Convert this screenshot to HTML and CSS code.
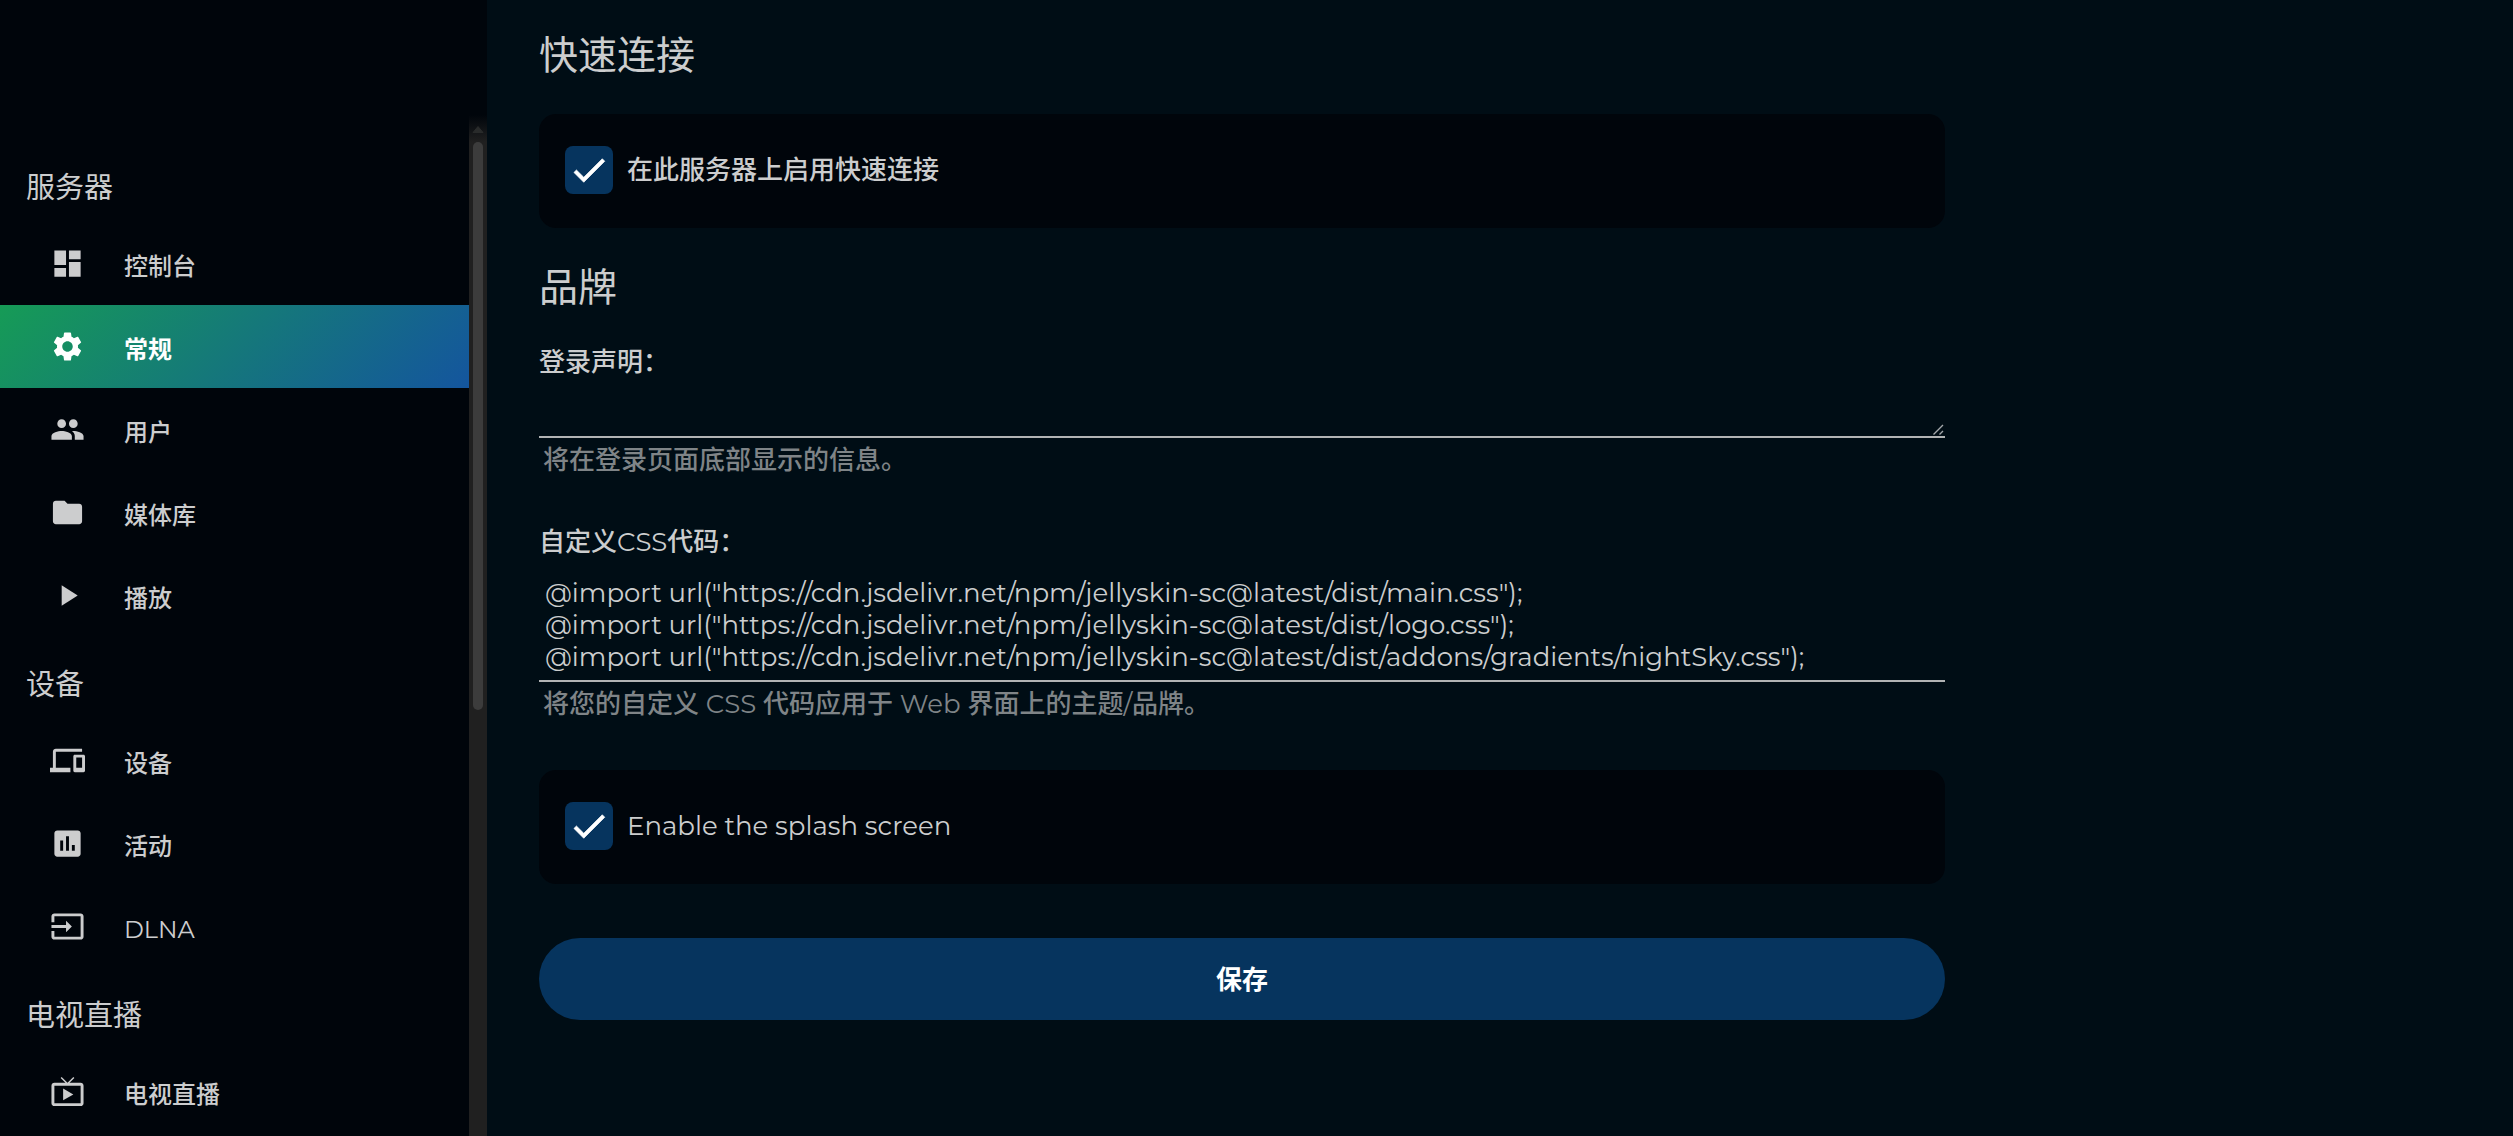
FILE: index.html
```html
<!DOCTYPE html>
<html lang="zh-CN">

<head>
    <meta charset="UTF-8">
    <meta name="viewport" content="width=device-width, initial-scale=1.0">
    <title>常规</title>
    <link rel="stylesheet" href="styles.css">
</head>

<body>
    <div class="container">
        <aside class="sidebar">
            <nav class="sidebar-nav">
                <h3 class="nav-header">服务器</h3>
                <a href="#" class="nav-item">
                    <svg class="nav-icon" viewBox="0 0 24 24"><path d="M3 13h8V3H3v10zm0 8h8v-6H3v6zm10 0h8V11h-8v10zm0-18v6h8V3h-8z"/></svg>
                    <span>控制台</span>
                </a>
                <a href="#" class="nav-item active">
                    <svg class="nav-icon" viewBox="0 0 24 24"><path d="M19.14 12.94c.04-.3.06-.61.06-.94 0-.32-.02-.64-.07-.94l2.03-1.58c.18-.14.23-.41.12-.61l-1.92-3.32c-.12-.22-.37-.29-.59-.22l-2.39.96c-.5-.38-1.03-.7-1.62-.94l-.36-2.54c-.04-.24-.24-.41-.48-.41h-3.84c-.24 0-.43.17-.47.41l-.36 2.54c-.59.24-1.13.57-1.62.94l-2.39-.96c-.22-.08-.47 0-.59.22L2.74 8.87c-.12.21-.08.47.12.61l2.03 1.58c-.05.3-.09.63-.09.94s.02.64.07.94l-2.03 1.58c-.18.14-.23.41-.12.61l1.92 3.32c.12.22.37.29.59.22l2.39-.96c.5.38 1.03.7 1.62.94l.36 2.54c.05.24.24.41.48.41h3.84c.24 0 .44-.17.47-.41l.36-2.54c.59-.24 1.13-.56 1.62-.94l2.39.96c.22.08.47 0 .59-.22l1.92-3.32c.12-.22.07-.47-.12-.61l-2.01-1.58zM12 15.6c-1.98 0-3.6-1.62-3.6-3.6s1.62-3.6 3.6-3.6 3.6 1.62 3.6 3.6-1.62 3.6-3.6 3.6z"/></svg>
                    <span>常规</span>
                </a>
                <a href="#" class="nav-item">
                    <svg class="nav-icon" viewBox="0 0 24 24"><path d="M16 11c1.66 0 2.99-1.34 2.99-3S17.66 5 16 5c-1.66 0-3 1.34-3 3s1.34 3 3 3zm-8 0c1.66 0 2.99-1.34 2.99-3S9.66 5 8 5C6.34 5 5 6.34 5 8s1.34 3 3 3zm0 2c-2.33 0-7 1.17-7 3.5V19h14v-2.5c0-2.33-4.67-3.5-7-3.5zm8 0c-.29 0-.62.02-.97.05 1.16.84 1.97 1.97 1.97 3.45V19h6v-2.5c0-2.33-4.67-3.5-7-3.5z"/></svg>
                    <span>用户</span>
                </a>
                <a href="#" class="nav-item">
                    <svg class="nav-icon" viewBox="0 0 24 24"><path d="M10 4H4c-1.1 0-1.99.9-1.99 2L2 18c0 1.1.9 2 2 2h16c1.1 0 2-.9 2-2V8c0-1.1-.9-2-2-2h-8l-2-2z"/></svg>
                    <span>媒体库</span>
                </a>
                <a href="#" class="nav-item">
                    <svg class="nav-icon" viewBox="0 0 24 24"><path d="M8 5v14l11-7z"/></svg>
                    <span>播放</span>
                </a>
                <h3 class="nav-header">设备</h3>
                <a href="#" class="nav-item">
                    <svg class="nav-icon" viewBox="0 0 24 24"><path d="M4 6h18V4H4c-1.1 0-2 .9-2 2v11H0v3h14v-3H4V6zm19 2h-6c-.55 0-1 .45-1 1v10c0 .55.45 1 1 1h6c.55 0 1-.45 1-1V9c0-.55-.45-1-1-1zm-1 9h-4v-7h4v7z"/></svg>
                    <span>设备</span>
                </a>
                <a href="#" class="nav-item">
                    <svg class="nav-icon" viewBox="0 0 24 24"><path d="M19 3H5c-1.1 0-2 .9-2 2v14c0 1.1.9 2 2 2h14c1.1 0 2-.9 2-2V5c0-1.1-.9-2-2-2zM9 17H7v-7h2v7zm4 0h-2V7h2v10zm4 0h-2v-4h2v4z"/></svg>
                    <span>活动</span>
                </a>
                <a href="#" class="nav-item">
                    <svg class="nav-icon" viewBox="0 0 24 24"><path d="M21 3.01H3c-1.1 0-2 .9-2 2V9h2V4.99h18v14.03H3V15H1v4.01c0 1.1.9 1.98 2 1.98h18c1.1 0 2-.88 2-1.98v-14c0-1.11-.9-2-2-2zM11 16l4-4-4-4v3H1v2h10v3z"/></svg>
                    <span>DLNA</span>
                </a>
                <h3 class="nav-header">电视直播</h3>
                <a href="#" class="nav-item">
                    <svg class="nav-icon" viewBox="0 0 24 24"><path d="M21 6h-7.59l3.29-3.29L16 2l-4 4-4-4-.7.71L10.59 6H3c-1.1 0-2 .89-2 2v12c0 1.1.9 2 2 2h18c1.1 0 2-.9 2-2V8c0-1.11-.9-2-2-2zm0 14H3V8h18v12zM9 10v8l7-4z"/></svg>
                    <span>电视直播</span>
                </a>
            </nav>
            <div class="scrollbar">
                <svg class="scroll-arrow" viewBox="0 0 12 8"><path d="M6 1L11 7H1z"/></svg>
                <div class="scroll-thumb"></div>
            </div>
        </aside>

        <main class="main-content">
            <form class="settings-form">
                <h2>快速连接</h2>
                <label class="checkbox-card">
                    <input type="checkbox" class="checkbox" checked>
                    <span>在此服务器上启用快速连接</span>
                </label>

                <h2>品牌</h2>
                <div class="field">
                    <label for="login-disclaimer">登录声明：</label>
                    <textarea id="login-disclaimer" rows="1"></textarea>
                    <p class="field-description">将在登录页面底部显示的信息。</p>
                </div>
                <div class="field">
                    <label for="custom-css">自定义CSS代码：</label>
                    <textarea id="custom-css" class="no-resize" rows="3" spellcheck="false">@import url("https://cdn.jsdelivr.net/npm/jellyskin-sc@latest/dist/main.css");
@import url("https://cdn.jsdelivr.net/npm/jellyskin-sc@latest/dist/logo.css");
@import url("https://cdn.jsdelivr.net/npm/jellyskin-sc@latest/dist/addons/gradients/nightSky.css");</textarea>
                    <p class="field-description">将您的自定义 CSS 代码应用于 Web 界面上的主题/品牌。</p>
                </div>

                <label class="checkbox-card">
                    <input type="checkbox" class="checkbox" checked>
                    <span>Enable the splash screen</span>
                </label>

                <button type="submit" class="save-btn">保存</button>
            </form>
        </main>
    </div>
</body>

</html>
```
FILE: styles.css
```css
* {
    box-sizing: border-box;
}

body,
html {
    margin: 0;
    padding: 0;
    height: 100%;
    background-color: #000d15;
    color: #cccdce;
    color-scheme: dark;
    font-family: Montserrat, 'Noto Sans CJK SC Medium', 'Noto Sans CJK SC', sans-serif;
    font-size: 26px;
    line-height: 32px;
}

.container {
    display: flex;
    height: 100%;
    overflow: hidden;
}

.sidebar {
    display: flex;
    flex-shrink: 0;
    width: 487px;
    background-color: #00050b;
}

.sidebar-nav {
    flex-grow: 1;
    padding-top: 140px;
}

h2,
.nav-header,
.nav-item.active,
.save-btn {
    font-family: Montserrat, 'Noto Sans CJK SC', sans-serif;
}

.nav-header {
    height: 82px;
    margin: 0;
    padding: 32px 26px 0;
    font-size: 29px;
    font-weight: 400;
}

.nav-item {
    display: flex;
    align-items: center;
    gap: 39px;
    height: 83px;
    padding-left: 50px;
    color: inherit;
    font-size: 24px;
    text-decoration: none;
}

.nav-item span {
    padding-top: 6px;
}

.nav-item.active {
    background: linear-gradient(135deg, #169b56, #14559e);
    color: white;
    font-weight: 700;
}

.nav-icon {
    width: 35px;
    height: 35px;
    fill: currentColor;
}

.scrollbar {
    display: flex;
    flex-direction: column;
    align-items: center;
    gap: 8px;
    width: 18px;
    padding-top: 125px;
    background: linear-gradient(#00050b 115px, #202020 142px);
}

.scroll-arrow {
    width: 12px;
    height: 9px;
    flex-shrink: 0;
    fill: #292b2b;
    stroke: #292b2b;
    stroke-linejoin: round;
}

.scroll-thumb {
    width: 10px;
    height: 50vh;
    border-radius: 5px;
    background-color: #3c3c3c;
}

.main-content {
    flex-grow: 1;
    padding: 26px 52px;
}

.settings-form {
    max-width: 1406px;
}

h2 {
    margin: 0 0 30px;
    font-size: 39px;
    font-weight: 400;
    line-height: 58px;
}

.checkbox-card {
    display: flex;
    align-items: center;
    gap: 14px;
    margin-bottom: 30px;
    padding: 32px 26px 34px;
    border-radius: 17px;
    background-color: #00050b;
}

.checkbox {
    appearance: none;
    width: 48px;
    height: 48px;
    margin: 0;
    border-radius: 8px;
    background: #06345e url("data:image/svg+xml,%3Csvg xmlns='http://www.w3.org/2000/svg' viewBox='0 0 24 24' fill='white' stroke='white' stroke-width='.4'%3E%3Cpath d='M9 16.17L4.83 12l-1.42 1.41L9 19 21 7l-1.41-1.41z'/%3E%3C/svg%3E") center / 42px no-repeat;
}

.field {
    display: flex;
    flex-direction: column;
    margin-bottom: 50px;
}

.field label {
    margin-bottom: 9px;
}

textarea {
    padding: 10px 6px 7px;
    border: none;
    border-bottom: 2px solid #b1b3b4;
    background: none;
    color: inherit;
    font: inherit;
    overflow: hidden;
    resize: vertical;
}

textarea::-webkit-resizer {
    background: url("data:image/svg+xml,%3Csvg xmlns='http://www.w3.org/2000/svg' viewBox='0 0 15 15' stroke='%23a4a8ab' stroke-width='1.4'%3E%3Cpath d='M3.5 13.5L13 4M9.5 13.5L13 10'/%3E%3C/svg%3E") right bottom / 15px no-repeat;
}

textarea.no-resize {
    resize: none;
}

.field-description {
    margin: 6px 0 0;
    padding: 0 4px;
    color: #7f8487;
}

.save-btn {
    width: 100%;
    height: 82px;
    margin-top: 24px;
    padding-bottom: 4px;
    border: none;
    border-radius: 41px;
    background-color: #06345e;
    color: white;
    font-size: 26px;
    font-weight: 700;
    cursor: pointer;
}
```
